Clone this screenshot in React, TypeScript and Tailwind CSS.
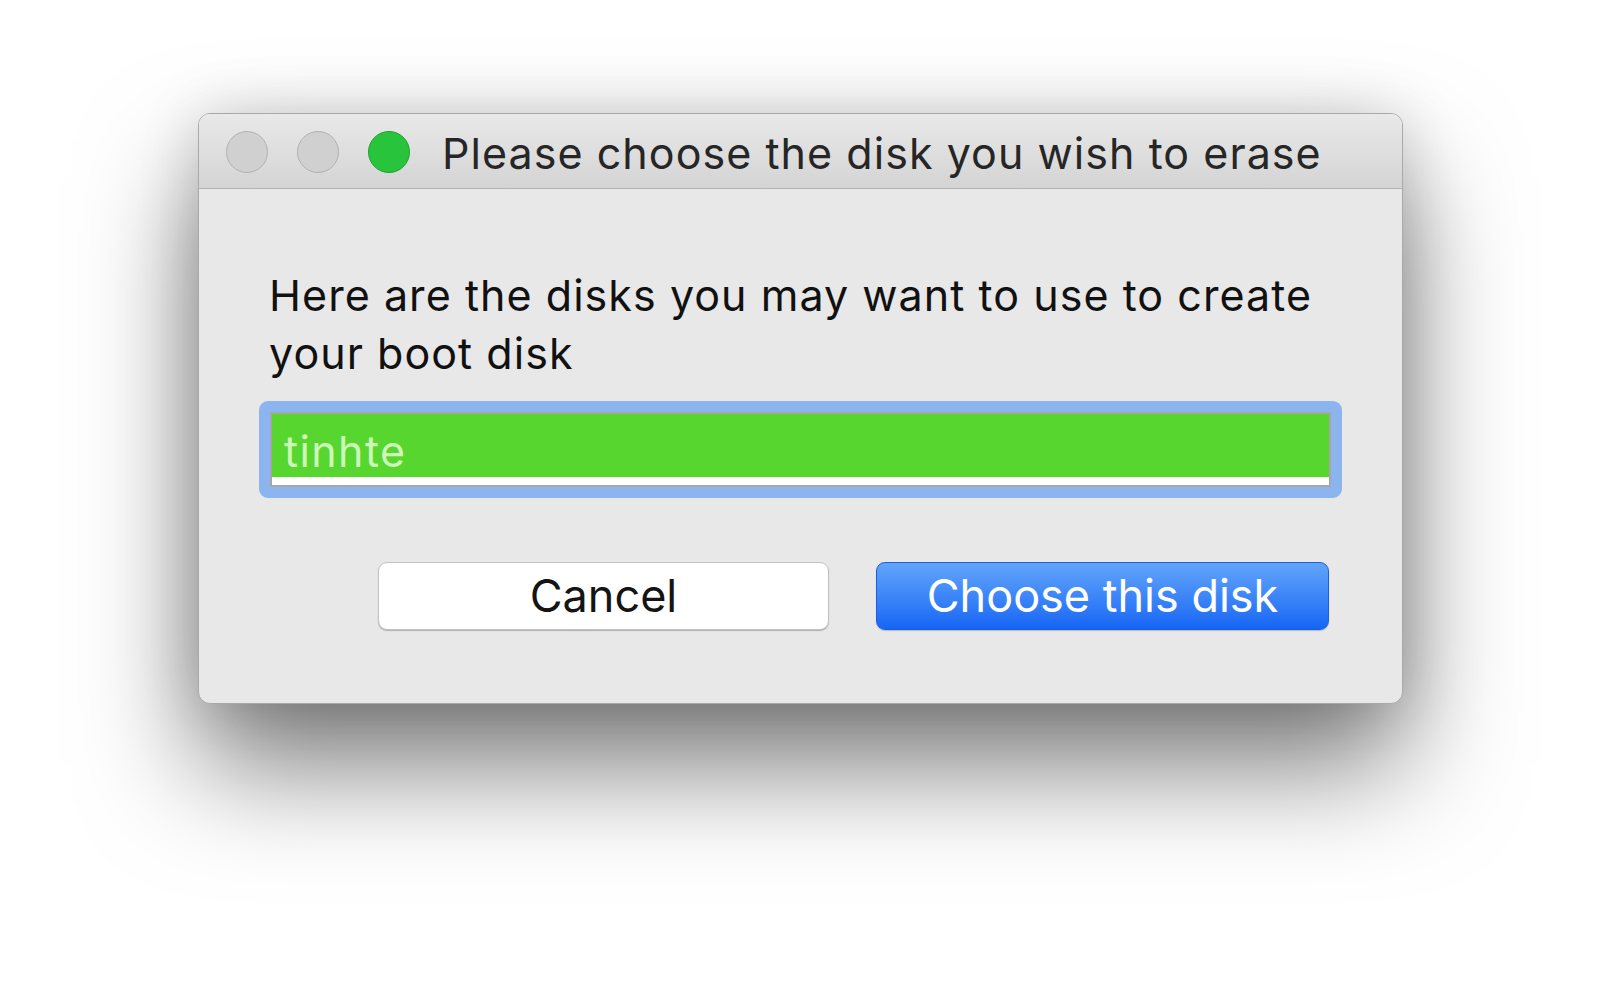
import React from "react";

const font = { fontFamily: 'Inter, "Noto Sans", sans-serif' };

export default function App() {
  return (
    <div className="w-[1600px] h-[988px] bg-white overflow-hidden" style={font}>
      <div className="pt-[113px] pl-[198px]">
        <div className="w-[1205px] h-[591px] rounded-[12px] bg-[#e8e8e8] border border-[#a9a9a9] overflow-hidden shadow-[0_62px_115px_rgba(0,0,0,0.52),0_0_60px_rgba(0,0,0,0.15)] flex flex-col">
          {/* Title bar */}
          <div className="h-[75px] shrink-0 bg-gradient-to-b from-[#e9e9e9] to-[#d4d4d4] border-b border-[#b4b4b4] flex items-start pl-[27px]">
            <div className="flex gap-[29px] mt-[17px]">
              <div className="w-[42px] h-[42px] rounded-full bg-[#d0d0d0] border-[1.5px] border-[#b2b2b2]" />
              <div className="w-[42px] h-[42px] rounded-full bg-[#d0d0d0] border-[1.5px] border-[#b2b2b2]" />
              <div className="w-[42px] h-[42px] rounded-full bg-[#28c53c] border-[1.5px] border-[#1ea230]" />
            </div>
            <div className="ml-[32px] mt-[13px] text-[43px] leading-[52px] tracking-[1.05px] text-[#262626] whitespace-nowrap">
              Please choose the disk you wish to erase
            </div>
          </div>
          {/* Body */}
          <div className="flex flex-col pt-[77px]">
            <div className="pl-[70px] pr-[40px] text-[43px] leading-[58px] tracking-[1.05px] text-[#111] whitespace-nowrap">
              Here are the disks you may want to use to create
              <br />
              your boot disk
            </div>
            <div className="mt-[19px] ml-[60px] w-[1083px] h-[97px] rounded-[9px] border-[11px] border-[#8cb4ef]">
              <div className="h-full border-2 border-[#a6a6a6] bg-white flex flex-col">
                <div className="h-[63px] bg-[#57d62f] pt-[11px] pl-[12px] text-[43px] leading-[52px] tracking-[1.4px] text-[#cdf7b8]">
                  tinhte
                </div>
              </div>
            </div>
            <div className="mt-[64px] flex justify-end gap-[47px] pr-[73px]">
              <button className="w-[451px] h-[68px] rounded-[9px] bg-white border border-[#c2c2c2] shadow-[0_1px_1px_rgba(0,0,0,0.25)] text-[45px] leading-[66px] text-[#141414]">
                Cancel
              </button>
              <button className="w-[453px] h-[68px] rounded-[9px] bg-gradient-to-b from-[#62a4fa] to-[#1565f5] border border-[#1a5fe0] shadow-[0_1px_1px_rgba(0,0,0,0.2)] text-[45px] leading-[66px] text-white">
                Choose this disk
              </button>
            </div>
          </div>
        </div>
      </div>
    </div>
  );
}
